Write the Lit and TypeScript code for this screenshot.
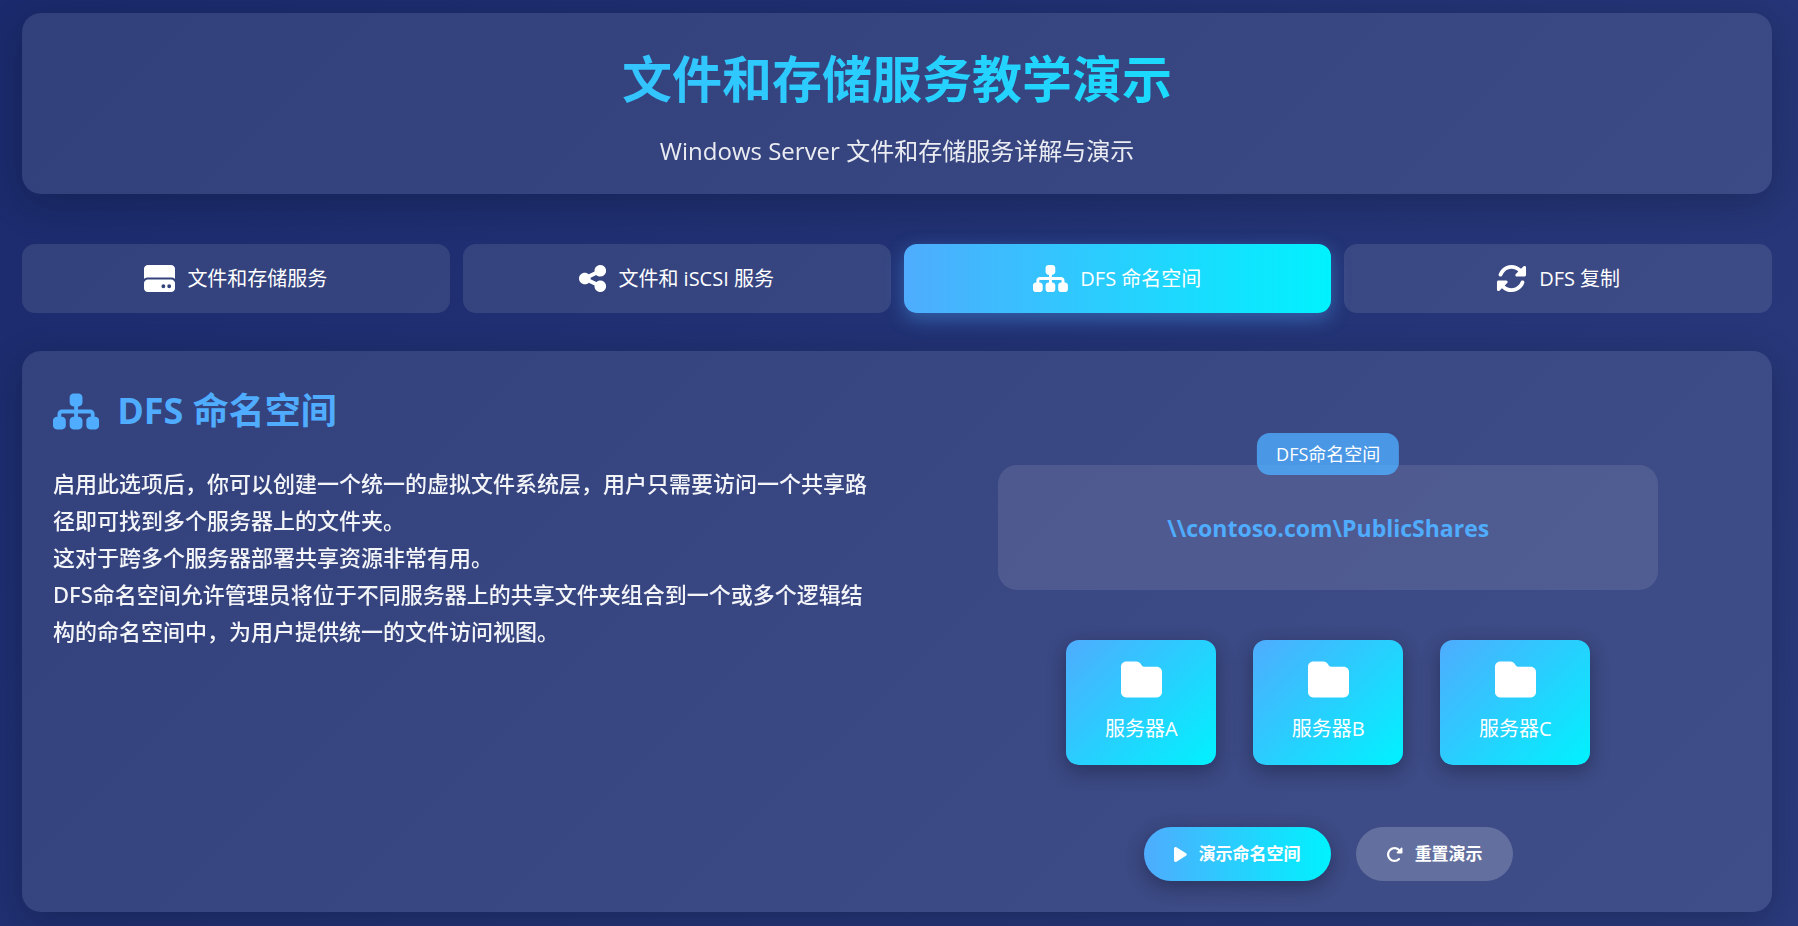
import { LitElement, html, css, svg } from "lit";
import { customElement, property, state } from "lit/decorators.js";

const ICONS: Record<string, { w: number; d: string }> = {
  drive: { w: 512, d: "M64 32C28.700 32 0 60.700 0 96V256c0-0 0-0 0 8.400C17 248.400 39.500 240 64 240H448c24.500 0 47 8.400 64 22.400V96c0-35.300-28.700-64-64-64H64zM448 272H64c-35.300 0-64 28.700-64 64v80c0 35.300 28.700 64 64 64H448c35.300 0 64-28.700 64-64V336c0-35.300-28.700-64-64-64zM288 384a32 32 0 1 1 64 0 32 32 0 1 1-64 0zm96 0a32 32 0 1 1 64 0 32 32 0 1 1-64 0z" },
  share: { w: 448, d: "M352 224c53 0 96-43 96-96s-43-96-96-96s-96 43-96 96c0 4 .2 8 .7 11.900l-94.100 47C145.400 170.200 121.900 160 96 160c-53 0-96 43-96 96s43 96 96 96c25.900 0 49.400-10.200 66.600-26.900l94.100 47c-.5 3.900-.7 7.800-.7 11.900c0 53 43 96 96 96s96-43 96-96s-43-96-96-96c-25.900 0-49.400 10.200-66.600 26.900l-94.100-47c.5-3.900 .7-7.800 .7-11.900s-.2-8-.7-11.900l94.100-47C302.600 213.800 326.100 224 352 224z" },
  sitemap: { w: 576, d: "M208 80c0-26.500 21.500-48 48-48h64c26.500 0 48 21.500 48 48v64c0 26.500-21.500 48-48 48h-8v40H464c30.900 0 56 25.100 56 56v32h8c26.500 0 48 21.500 48 48v64c0 26.500-21.500 48-48 48H464c-26.500 0-48-21.500-48-48V368c0-26.500 21.500-48 48-48h8V288c0-4.400-3.600-8-8-8H312v40h8c26.500 0 48 21.500 48 48v64c0 26.500-21.500 48-48 48H256c-26.500 0-48-21.500-48-48V368c0-26.500 21.500-48 48-48h8V280H112c-4.400 0-8 3.600-8 8v32h8c26.500 0 48 21.500 48 48v64c0 26.500-21.500 48-48 48H48c-26.500 0-48-21.500-48-48V368c0-26.500 21.500-48 48-48h8V288c0-30.900 25.100-56 56-56H264V192h-8c-26.500 0-48-21.500-48-48V80z" },
  sync: { w: 512, d: "M142.900 142.900c62.200-62.200 162.700-62.500 225.300-1L327 183c-6.900 6.900-8.900 17.200-5.200 26.200s12.500 14.800 22.200 14.800H463.500c0 0 0 0 0 0H472c13.300 0 24-10.700 24-24V72c0-9.700-5.800-18.500-14.800-22.200s-19.300-1.700-26.200 5.200L413.400 96.600c-87.600-86.500-228.700-86.200-315.800 1C73.200 122 55.600 150.700 44.800 181.400c-5.900 16.700 2.900 34.900 19.500 40.800s34.900-2.900 40.800-19.500c7.700-21.800 20.200-42.300 37.800-59.800zM16 312v7.600 .7V440c0 9.700 5.800 18.500 14.800 22.200s19.300 1.700 26.200-5.200l41.600-41.600c87.600 86.500 228.700 86.200 315.800-1c24.400-24.400 42.100-53.100 52.900-83.700c5.900-16.700-2.900-34.900-19.500-40.800s-34.900 2.900-40.800 19.500c-7.700 21.800-20.200 42.300-37.800 59.800c-62.200 62.200-162.700 62.500-225.300 1L185 329c6.900-6.900 8.900-17.200 5.200-26.200s-12.500-14.800-22.200-14.800H48.400h-.7H40c-13.300 0-24 10.700-24 24z" },
  folder: { w: 512, d: "M64 480H448c35.300 0 64-28.700 64-64V160c0-35.300-28.700-64-64-64H288c-10.100 0-19.600-4.700-25.600-12.800L243.200 57.600C231.100 41.500 212.100 32 192 32H64C28.700 32 0 60.700 0 96V416c0 35.300 28.700 64 64 64z" },
  play: { w: 384, d: "M73 39c-14.800-9.100-33.400-9.400-48.500-.9S0 62.600 0 80V432c0 17.400 9.400 33.400 24.500 41.900s33.700 8.100 48.500-.9L361 297c14.300-8.700 23-24.200 23-41s-8.700-32.200-23-41L73 39z" },
  redo: { w: 512, d: "M463.500 224H472c13.300 0 24-10.700 24-24V72c0-9.700-5.800-18.500-14.800-22.200s-19.300-1.700-26.200 5.200L413.400 96.600c-87.600-86.500-228.700-86.200-315.800 1c-87.500 87.500-87.500 229.300 0 316.800s229.300 87.500 316.800 0c12.500-12.500 12.500-32.800 0-45.300s-32.800-12.500-45.300 0c-62.500 62.500-163.800 62.500-226.300 0s-62.500-163.800 0-226.300c62.200-62.200 162.700-62.500 225.300-1L327 183c-6.900 6.900-8.900 17.200-5.200 26.200s12.500 14.800 22.200 14.800H463.500z" },
};

@customElement("fa-icon")
class FaIcon extends LitElement {
  @property() name = "folder";
  static styles = css`
    :host { display: inline-flex; }
    svg { height: 1em; width: auto; display: block; fill: currentColor; }
  `;
  render() {
    const icon = ICONS[this.name];
    return html`<svg viewBox="0 0 ${icon.w} 512" aria-hidden="true">${svg`<path d=${icon.d} />`}</svg>`;
  }
}

const TABS = [
  { id: "storage", icon: "drive", label: "文件和存储服务" },
  { id: "iscsi", icon: "share", label: "文件和 iSCSI 服务" },
  { id: "namespace", icon: "sitemap", label: "DFS 命名空间" },
  { id: "replication", icon: "sync", label: "DFS 复制" },
];

@customElement("app-root")
class AppRoot extends LitElement {
  @state() active = "namespace";

  static styles = css`
    :host {
      display: block;
      box-sizing: border-box;
      min-height: 100vh;
      padding: 13px 26px 14px 22px;
      background: linear-gradient(135deg, #1a2a6c, #2a3a7c);
      color: #fff;
      font-family: "Segoe UI", "Open Sans", "Noto Sans CJK SC", sans-serif;
    }
    *, *::before { box-sizing: border-box; }
    h1, h2, p { margin: 0; }
    .card {
      background: rgba(255, 255, 255, 0.1);
      border-radius: 19px;
      box-shadow: 0 10px 38px rgba(0, 0, 0, 0.2);
    }
    .header { padding: 31px 31px 26px; text-align: center; }
    .title {
      font-size: 50px;
      line-height: 70px;
      font-weight: 700;
      margin-bottom: 20px;
      background: linear-gradient(90deg, #4facfe, #00f2fe);
      -webkit-background-clip: text;
      background-clip: text;
      color: transparent;
    }
    .subtitle { font-size: 24px; line-height: 34px; opacity: 0.9; }
    .tabs {
      display: grid;
      grid-template-columns: repeat(4, 1fr);
      gap: 13px;
      margin: 50px 0 38px;
    }
    button { font-family: inherit; color: inherit; border: 0; cursor: pointer; }
    .tab {
      display: flex;
      align-items: center;
      justify-content: center;
      gap: 12px;
      padding: 19px;
      font-size: 20px;
      line-height: 31px;
      border-radius: 13px;
      background: rgba(255, 255, 255, 0.1);
    }
    .tab fa-icon { font-size: 31px; }
    .tab.active {
      background: linear-gradient(90deg, #4facfe, #00f2fe);
      box-shadow: 0 6px 19px rgba(79, 172, 254, 0.4);
    }
    .panel {
      display: grid;
      grid-template-columns: 1fr 1fr;
      gap: 37px;
      padding: 31px;
    }
    .heading {
      display: flex;
      align-items: center;
      gap: 18px;
      margin-bottom: 25px;
      font-size: 36px;
      line-height: 58px;
      color: #4facfe;
    }
    .heading fa-icon { font-size: 41px; }
    .text {
      font-family: "Segoe UI", "Noto Sans", "Noto Sans CJK SC", sans-serif;
      font-size: 22px;
      line-height: 37px;
      font-weight: 500;
      opacity: 0.95;
    }
    .demo { display: flex; flex-direction: column; align-items: center; padding-top: 83px; }
    .namespace {
      position: relative;
      display: flex;
      align-items: center;
      justify-content: center;
      width: 80%;
      height: 125px;
      border-radius: 19px;
      background: rgba(255, 255, 255, 0.1);
    }
    .badge {
      position: absolute;
      top: -32px;
      left: 50%;
      transform: translateX(-50%);
      padding: 8px 19px;
      font-size: 18px;
      line-height: 26px;
      white-space: nowrap;
      border-radius: 13px;
      background: rgba(79, 172, 254, 0.8);
    }
    .path { font-size: 23px; line-height: 32px; font-weight: 700; color: #4facfe; }
    .servers { display: flex; gap: 37px; margin: 50px 0 62px; }
    .server {
      display: flex;
      flex-direction: column;
      align-items: center;
      gap: 15px;
      width: 150px;
      height: 125px;
      padding-top: 19px;
      font-size: 20px;
      line-height: 28px;
      border-radius: 13px;
      background: linear-gradient(135deg, #4facfe, #00f2fe);
      box-shadow: 0 6px 19px rgba(0, 0, 0, 0.3);
    }
    .server fa-icon { font-size: 41px; }
    .actions { display: flex; gap: 25px; }
    .action {
      display: flex;
      align-items: center;
      gap: 12px;
      padding: 15px 30px;
      font-size: 17px;
      line-height: 24px;
      font-weight: 700;
      border-radius: 27px;
      background: rgba(255, 255, 255, 0.2);
    }
    .primary {
      background: linear-gradient(90deg, #4facfe, #00f2fe);
      box-shadow: 0 6px 19px rgba(0, 0, 0, 0.3);
    }
  `;

  render() {
    return html`
      <header class="card header">
        <h1 class="title">文件和存储服务教学演示</h1>
        <p class="subtitle">Windows Server 文件和存储服务详解与演示</p>
      </header>
      <nav class="tabs">
        ${TABS.map(
          (t) => html`<button
            type="button"
            class="tab ${t.id === this.active ? "active" : ""}"
            @click=${() => (this.active = t.id)}
          ><fa-icon name=${t.icon}></fa-icon><span>${t.label}</span></button>`
        )}
      </nav>
      <main class="card panel">
        <section>
          <h2 class="heading"><fa-icon name="sitemap"></fa-icon><span>DFS 命名空间</span></h2>
          <p class="text">启用此选项后，你可以创建一个统一的虚拟文件系统层，用户只需要访问一个共享路径即可找到多个服务器上的文件夹。</p>
          <p class="text">这对于跨多个服务器部署共享资源非常有用。</p>
          <p class="text">DFS命名空间允许管理员将位于不同服务器上的共享文件夹组合到一个或多个逻辑结构的命名空间中，为用户提供统一的文件访问视图。</p>
        </section>
        <section class="demo">
          <div class="namespace">
            <span class="badge">DFS命名空间</span>
            <span class="path">\\\\contoso.com\\PublicShares</span>
          </div>
          <div class="servers">
            ${["A", "B", "C"].map(
              (s) => html`<div class="server"><fa-icon name="folder"></fa-icon><span>服务器${s}</span></div>`
            )}
          </div>
          <div class="actions">
            <button type="button" class="action primary"><fa-icon name="play"></fa-icon><span>演示命名空间</span></button>
            <button type="button" class="action"><fa-icon name="redo"></fa-icon><span>重置演示</span></button>
          </div>
        </section>
      </main>
    `;
  }
}
